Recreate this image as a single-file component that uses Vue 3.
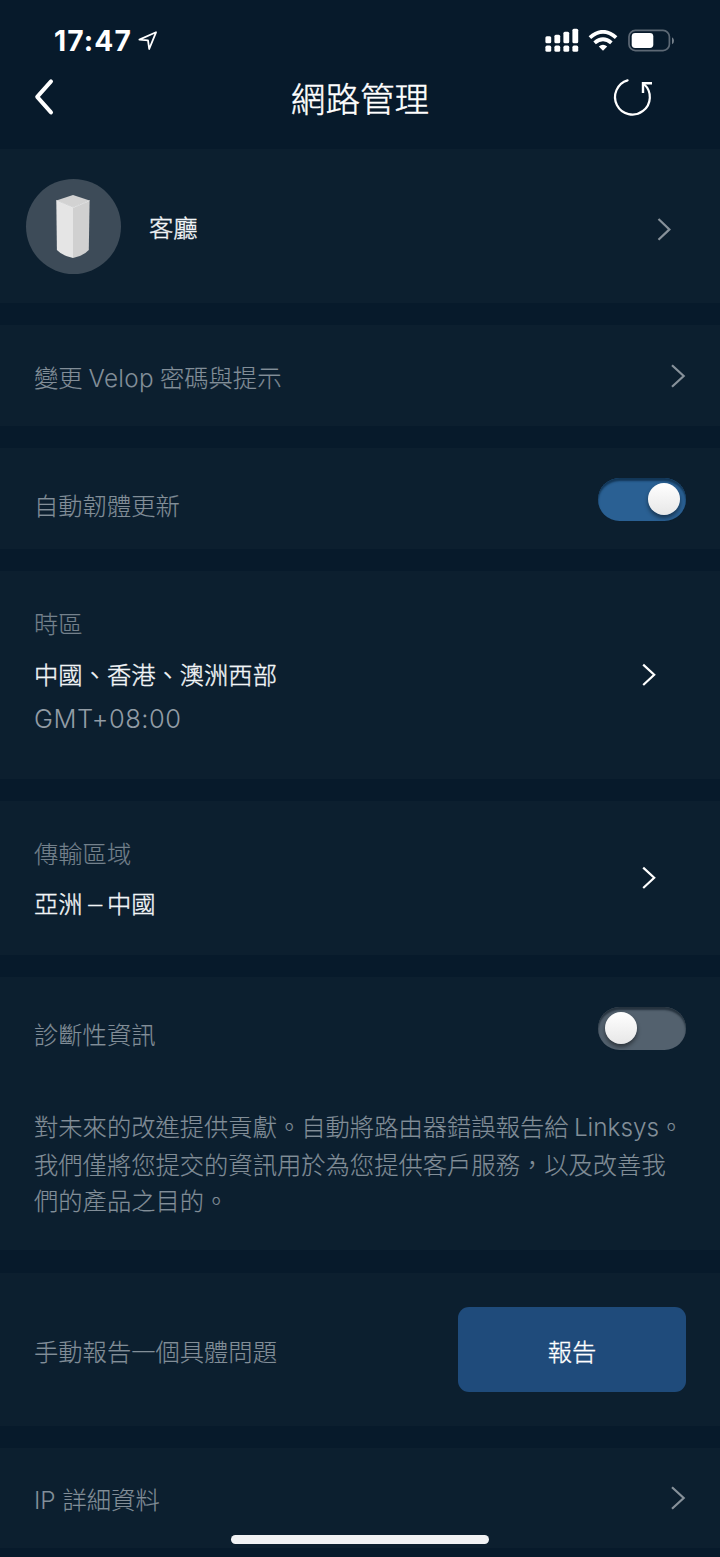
<script setup>
const signalBars = [7, 8.5, 11.5, 14.5]
</script>

<template>
  <div class="screen">
    <header class="header">
      <div class="status">
        <div class="clock">
          <span class="time">17:47</span>
          <svg class="location" width="20" height="20" viewBox="0 0 20 20">
            <path d="M1.4 8.6 18 1.3 11.2 18 10 9.4Z" fill="none" stroke="#fff" stroke-width="1.8" stroke-linejoin="round" />
          </svg>
        </div>
        <div class="indicators">
          <svg width="34" height="24" viewBox="0 0 34 24" fill="#fff">
            <g v-for="(h, i) in signalBars" :key="i">
              <rect :x="0.4 + i * 9" :y="15.2 - h" width="5.8" :height="h" rx="1.5" />
              <rect :x="0.4 + i * 9" y="17.6" width="5.8" height="6.2" rx="1.6" />
            </g>
          </svg>
          <svg class="wifi" width="30" height="22" viewBox="0 0 30 22">
            <g fill="none" stroke="#fff" stroke-width="3.8">
              <path d="M1.9 7.7Q15-4 28.1 7.7" />
              <path d="M6.6 12.9Q15 5.6 23.4 12.9" />
            </g>
            <path d="M10.8 16.5Q15 13.1 19.2 16.5L15 20.8Z" fill="#fff" />
          </svg>
          <svg class="battery" width="47" height="24" viewBox="0 0 47 24">
            <rect x="1" y="1.4" width="40.4" height="20.2" rx="6.4" fill="none" stroke="#5d6975" stroke-width="1.7" />
            <rect x="3.7" y="4" width="21.6" height="15" rx="3.4" fill="#fff" />
            <path d="M44 8.2Q46 9.2 46 11.7T44 15.2Z" fill="#76818b" />
          </svg>
        </div>
      </div>
      <nav class="nav">
        <svg width="21" height="38" viewBox="0 0 21 38">
          <path d="M18 3.4 4.2 18.9 18 34.4" fill="none" stroke="#fff" stroke-width="4" stroke-linecap="round" stroke-linejoin="round" />
        </svg>
        <h1 class="title">網路管理</h1>
        <svg class="refresh" width="42" height="40" viewBox="0 0 42 40" fill="none" stroke="#fff" stroke-width="2.2">
          <path d="M15.6 2.4A17.4 17.4 0 1 0 32.1 6.2" stroke-linecap="round" />
          <path d="M31 15V5.2H40" stroke-width="2.4" />
        </svg>
      </nav>
    </header>

    <main class="cards">
      <section class="card node">
        <div class="avatar">
          <svg width="36" height="66" viewBox="0 0 36 66">
            <path d="M1.3 7.6 18 2 34.6 7.6 18 14.6Z" fill="#d2d2d2" />
            <path d="M1.3 7.6 18 14.6V65Q7.5 63 1.9 57Z" fill="#e5e5e5" />
            <path d="M18 14.6 34.6 7.6 33.8 57Q28.5 63 18 65Z" fill="#d0d0d0" />
            <path d="M1.3 7.6 18 14.6 34.6 7.6" fill="none" stroke="#eee" stroke-width=".8" />
          </svg>
        </div>
        <span class="text bright node-name">客廳</span>
        <svg class="chevron" width="15" height="26" viewBox="0 0 15 26"><path d="M1.5 3 12.4 13.4 1.5 23.8" /></svg>
      </section>

      <section class="card row password">
        <span class="text">變更 <span class="velop">Velop</span> 密碼與提示</span>
        <svg class="chevron" width="15" height="26" viewBox="0 0 15 26"><path d="M1 2.2 12.7 13 1 23.8" /></svg>
      </section>

      <section class="card row firmware">
        <span class="text">自動韌體更新</span>
        <span class="toggle on"><i class="knob"></i></span>
      </section>

      <section class="card stack timezone">
        <div class="lines">
          <span class="text dim">時區</span>
          <span class="text bright value">中國、香港、澳洲西部</span>
          <span class="text gmt">GMT+08:00</span>
        </div>
        <svg class="chevron white" width="15" height="26" viewBox="0 0 15 26"><path d="M1.2 2.6 12.2 12.8 1.2 23" /></svg>
      </section>

      <section class="card stack region">
        <div class="lines">
          <span class="text dim">傳輸區域</span>
          <span class="text bright value">亞洲<span class="dash">—</span>中國</span>
        </div>
        <svg class="chevron white" width="15" height="26" viewBox="0 0 15 26"><path d="M1.2 2.6 12.2 12.8 1.2 23" /></svg>
      </section>

      <section class="card diagnostics">
        <div class="row diagnostics-head">
          <span class="text">診斷性資訊</span>
          <span class="toggle"><i class="knob"></i></span>
        </div>
        <p class="text note">對未來的改進提供貢獻。自動將路由器錯誤報告給 <span class="linksys">Linksys</span>。<br>我們僅將您提交的資訊用於為您提供客戶服務，以及改善我<br>們的產品之目的。</p>
      </section>

      <section class="card row report">
        <span class="text">手動報告一個具體問題</span>
        <button class="button">報告</button>
      </section>

      <section class="card row details">
        <span class="text"><span class="ip">IP</span> 詳細資料</span>
        <svg class="chevron" width="15" height="26" viewBox="0 0 15 26"><path d="M1 2.2 12.7 13 1 23.8" /></svg>
      </section>
    </main>
    <div class="home-indicator"></div>
  </div>
</template>

<style>
body {
  background: #071a2b;
}
</style>

<style scoped>
.screen {
  position: relative;
  width: 720px;
  height: 1557px;
  overflow: hidden;
  background: #071a2b;
  color: #fff;
  font-family: "Noto Sans CJK TC", sans-serif;
}
.header {
  height: 149px;
}
.status {
  display: flex;
  justify-content: space-between;
  height: 60px;
  padding: 28px 45px 0 54px;
  box-sizing: border-box;
}
.clock {
  display: flex;
}
.time {
  width: 77px;
  font: 700 28.2px/26px Inter, sans-serif;
  letter-spacing: 1.1px;
  white-space: nowrap;
}
.location {
  margin: 3px 0 0 7px;
}
.indicators {
  display: flex;
}
.wifi {
  margin: 2px 0 0 9px;
}
.battery {
  margin: 1px 0 0 10px;
}
.nav {
  display: flex;
  justify-content: space-between;
  padding: 18px 66px 0 33px;
}
.title {
  position: relative;
  top: -1px;
  margin: 0 0 0 54px;
  height: 40px;
  font-size: 34.6px;
  font-weight: 300;
  line-height: 40px;
  -webkit-text-stroke: 0.4px #fff;
}
.cards {
  display: grid;
  grid-template-rows: 154px 101px 101px 208px 154px 273px 153px 100px;
  row-gap: 22.1px;
}
.card {
  background: #0c1f2f;
}
.row,
.stack,
.node {
  display: flex;
  justify-content: space-between;
  align-items: center;
  box-sizing: border-box;
  padding: 0 34px;
}
.text {
  color: #828e98;
  font-size: 24.3px;
  font-weight: 300;
  line-height: 36.3px;
  white-space: nowrap;
  -webkit-text-stroke: 0.15px currentColor;
}
.row > .text {
  position: relative;
  top: 2px;
}
.text.dim {
  color: #74818c;
}
.text.bright {
  color: #f2f5f7;
  font-weight: 300;
  -webkit-text-stroke: 0.4px currentColor;
}
.velop,
.linksys,
.ip,
.gmt {
  font-family: Inter, sans-serif;
  -webkit-text-stroke: 0;
}
.velop {
  margin: 0 0.6px;
  letter-spacing: 0.3px;
}
.ip {
  margin-right: 1.5px;
}
.chevron {
  flex: none;
  fill: none;
  stroke: #87919a;
  stroke-width: 2.2;
}
.chevron.white {
  stroke: #fff;
}
.node {
  padding: 0 48px 0 25.5px;
}
.avatar {
  display: grid;
  place-items: center;
  width: 95px;
  height: 95px;
  border-radius: 50%;
  background: #3d4b58;
}
.node-name {
  flex: 1;
  margin: 2px 0 0 28.5px;
}
.node .chevron {
  margin-top: 6px;
}
.toggle {
  width: 88px;
  height: 43px;
  box-sizing: border-box;
  margin-top: 2px;
  padding: 5px 0 0 7px;
  border-radius: 22px;
  background: #53616e;
  box-shadow: inset 0 3px 2px #25323e;
}
.toggle.on {
  padding-left: 50px;
  background: #2a6093;
  box-shadow: inset 0 3px 2px #123657;
}
.knob {
  display: block;
  width: 32px;
  height: 32px;
  border-radius: 50%;
  background: linear-gradient(#fff, #e7e7e7);
  box-shadow: 0 3px 4px rgba(0, 0, 0, 0.45);
}
.firmware > .text {
  top: 6px;
}
.stack {
  padding: 0 63px 0 34px;
}
.lines {
  display: flex;
  flex-direction: column;
}
.timezone .lines {
  margin-bottom: 9px;
}
.value {
  margin-top: 14px;
}
.gmt {
  margin-top: 9px;
  margin-bottom: -1px;
  color: #929ca5;
  font-size: 25.5px;
  letter-spacing: 0.5px;
}
.dash {
  display: inline-block;
  width: 24.3px;
  text-align: center;
  transform: translateY(-1px) scaleX(0.72);
}
.diagnostics-head {
  height: 101px;
}
.diagnostics-head > .text {
  top: 6px;
}
.note {
  margin: 30px 0 0 34px;
}
.button {
  width: 228px;
  height: 85px;
  padding: 3px 0 0;
  border: 0;
  border-radius: 11px;
  background: #1f4b7b;
  color: #fff;
  font: 300 24.3px "Noto Sans CJK TC", sans-serif;
  -webkit-text-stroke: 0.3px currentColor;
}
.home-indicator {
  position: absolute;
  left: 231px;
  top: 1535px;
  width: 258px;
  height: 9px;
  border-radius: 5px;
  background: #f1f2f4;
}
</style>
